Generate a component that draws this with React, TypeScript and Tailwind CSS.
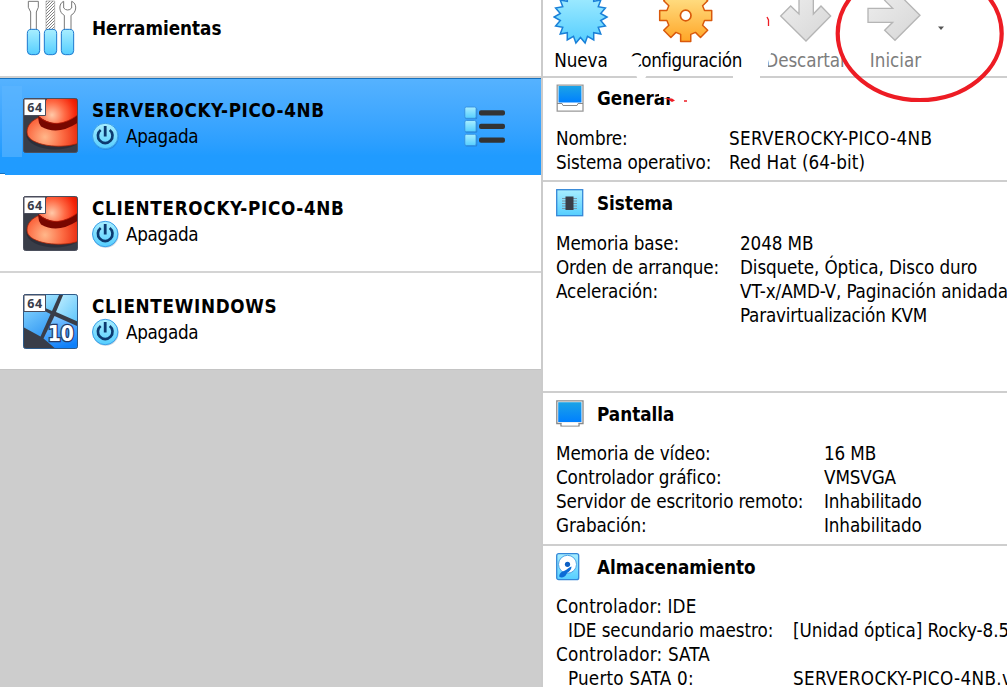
import React from 'react';

const polar = (cx: number, cy: number, r: number, deg: number) =>
  `${(cx + r * Math.cos((deg * Math.PI) / 180)).toFixed(2)},${(cy + r * Math.sin((deg * Math.PI) / 180)).toFixed(2)}`;

const starPoints = Array.from({ length: 36 }, (_, i) => polar(28, 17, i % 2 ? 20.5 : 26.5, i * 10)).join(' ');
const gearPoints = Array.from({ length: 8 }, (_, i) => {
  const a = i * 45;
  return [polar(28, 15.5, 19.5, a - 15), polar(28, 15.5, 26.5, a - 11), polar(28, 15.5, 26.5, a + 11), polar(28, 15.5, 19.5, a + 15)].join(' ');
}).join(' ');

function Defs() {
  return (
    <svg className="absolute h-0 w-0" aria-hidden="true">
      <defs>
        <linearGradient id="cyan" x1="0" y1="0" x2="0" y2="1">
          <stop offset="0" stopColor="#a8eeff" />
          <stop offset="1" stopColor="#55ceff" />
        </linearGradient>
        <linearGradient id="orange" x1="0" y1="0" x2="0" y2="1">
          <stop offset="0" stopColor="#ffe894" />
          <stop offset="1" stopColor="#ffa526" />
        </linearGradient>
        <linearGradient id="gray" x1="0" y1="0" x2="1" y2="1">
          <stop offset="0" stopColor="#eeeeee" />
          <stop offset="1" stopColor="#d6d6d6" />
        </linearGradient>
        <linearGradient id="screen" x1="0" y1="0" x2="0" y2="1">
          <stop offset="0" stopColor="#1ca3e6" />
          <stop offset="1" stopColor="#0080ff" />
        </linearGradient>
        <radialGradient id="crown" gradientUnits="userSpaceOnUse" cx="29" cy="17" r="32">
          <stop offset="0" stopColor="#ffc9a8" />
          <stop offset="0.4" stopColor="#ff6a45" />
          <stop offset="0.75" stopColor="#f52408" />
          <stop offset="1" stopColor="#cc1400" />
        </radialGradient>
        <radialGradient id="brim" gradientUnits="userSpaceOnUse" cx="22" cy="39" r="36">
          <stop offset="0" stopColor="#ffb78a" />
          <stop offset="0.5" stopColor="#fc6a42" />
          <stop offset="1" stopColor="#e62208" />
        </radialGradient>
        <linearGradient id="pane" x1="0" y1="0" x2="0.5" y2="1">
          <stop offset="0" stopColor="#8fdcff" />
          <stop offset="1" stopColor="#3c9ff5" />
        </linearGradient>
        <linearGradient id="paneLight" x1="0" y1="0" x2="1" y2="1">
          <stop offset="0" stopColor="#c4f0ff" />
          <stop offset="1" stopColor="#5cc4fb" />
        </linearGradient>
        <linearGradient id="paneDeep" x1="0" y1="0" x2="0.3" y2="1">
          <stop offset="0" stopColor="#8fcfff" />
          <stop offset="1" stopColor="#0f80fa" />
        </linearGradient>
        <pattern id="hatch" width="9" height="9" patternUnits="userSpaceOnUse">
          <path d="M0 9 L9 0" stroke="#555" strokeWidth="2.200" />
        </pattern>
        <clipPath id="tile">
          <rect x="1" y="1" width="53" height="53" rx="1.5" />
        </clipPath>
      </defs>
    </svg>
  );
}

function ToolsIcon() {
  return (
    <svg className="block" width="52" height="57" viewBox="78 0 156 171">
      <g fill="#fff" stroke="#777" strokeWidth="3">
        <path d="M85 4H115V22L109 36V90H92V36L85 22Z" />
        <path d="M191 4C175 10 176 38 193 46V90H213V46C231 37 232 10 215 4V24Q210 30 203 30Q196 30 191 24Z" />
      </g>
      <path d="M138 3H164V90H138Z" fill="#fff" />
      <path d="M138 3H164V90H138Z" fill="url(#hatch)" stroke="#999" strokeWidth="2" />
      <g fill="url(#cyan)" stroke="#1c78cf" strokeWidth="3">
        <rect x="82" y="88" width="37" height="76" rx="12" />
        <rect x="133" y="88" width="37" height="76" rx="12" />
        <rect x="184" y="88" width="37" height="76" rx="12" />
      </g>
    </svg>
  );
}

function Badge64() {
  return (
    <g>
      <path d="M1 1H22.5V17.5H1Z" fill="#fff" stroke="#4a4d5c" strokeWidth="1" />
      <text x="12" y="13.800" textAnchor="middle" fontFamily="Open Sans" fontWeight="700" fontSize="12.5" letterSpacing="0.5" fontStretch="normal" fill="#393d4b">64</text>
    </g>
  );
}

function HatIcon() {
  return (
    <svg className="block shrink-0" width="55" height="55" viewBox="0 0 55 55">
      <rect x="0.5" y="0.5" width="54" height="54" rx="2" fill="#393d48" stroke="#4b4f5c" />
      <g clipPath="url(#tile)">
        <ellipse cx="32" cy="36" rx="29" ry="15.5" fill="#20222b" opacity="0.5" />
        <path d="M4 34C4 27 9 22 17 19L56 20V45C46 49 30 49 20 46.500C10 44 4 40 4 34Z" fill="url(#brim)" stroke="#a82408" strokeWidth="0.800" />
        <path d="M16 20C16 14 20 6 25 0H56V22C42 32 22 31 16 20Z" fill="url(#crown)" />
        <path d="M15.500 18Q14.500 24 18 28.500Q35 38.500 56 24V16Q34 33.500 15.500 18Z" fill="#780700" />
        <path d="M16.500 19.500Q34 33 56 16" fill="none" stroke="#b51a07" strokeWidth="0.800" />
      </g>
      <Badge64 />
    </svg>
  );
}

function WindowsIcon() {
  return (
    <svg className="block shrink-0" width="55" height="55" viewBox="0 0 55 55">
      <rect x="0.5" y="0.5" width="54" height="54" rx="2" fill="#393d48" stroke="#2d5b8b" />
      <g clipPath="url(#tile)">
        <path d="M0 0H36.500L29 17L0 4Z" fill="url(#paneLight)" />
        <path d="M40.500 0H56V28L33 18Z" fill="url(#paneLight)" />
        <path d="M0 6L27.500 20L17.500 42.500L0 33Z" fill="url(#pane)" />
        <path d="M31.500 22L56 33V56H34L20.500 44.500Z" fill="url(#paneDeep)" />
      </g>
      <Badge64 />
      <text x="37.800" y="46.500" textAnchor="middle" fontFamily="DejaVu Sans Condensed, DejaVu Sans" fontWeight="700" fontSize="21" fill="#fff" stroke="#273b67" strokeWidth="2.500" paintOrder="stroke">10</text>
    </svg>
  );
}

function PowerIcon() {
  return (
    <svg className="block shrink-0" width="28" height="28" viewBox="0 0 28 28">
      <circle cx="13.700" cy="14.800" r="13" fill="#1b4f80" opacity="0.25" />
      <circle cx="13.200" cy="14" r="12.700" fill="url(#cyan)" stroke="#3c9fe8" strokeWidth="1" />
      <path d="M8.700 8A7.300 7.300 0 1 0 17.700 8" fill="none" stroke="#0c3a70" strokeWidth="2.700" />
      <path d="M13.200 4V14.500" stroke="#0c3a70" strokeWidth="2.800" />
    </svg>
  );
}

function ListIcon() {
  return (
    <svg className="block" width="43" height="42" viewBox="0 0 43 42">
      {[1, 14.5, 28.3].map((y) => (
        <g key={y}>
          <rect x="1.300" y={y + 0.7} width="12" height="11.500" rx="1.500" fill="#1c6db8" opacity="0.5" />
          <rect x="0.800" y={y} width="11.300" height="11.300" rx="1.500" fill="url(#cyan)" stroke="#3590df" strokeWidth="0.900" />
          <rect x="15" y={y + 3.3} width="26" height="5.200" rx="2" fill="#333" />
        </g>
      ))}
    </svg>
  );
}

function MonitorIcon({ desktop }: { desktop?: boolean }) {
  return (
    <svg className="block" width="28" height="28" viewBox="0 0 28 28">
      {desktop ? (
        <>
          <path d="M1.200 1.200H27V27.200H1.200Z" fill="#fff" stroke="#999" strokeWidth="1.300" />
          <path d="M1 19.500H6L7 21.500H21L22 19.500H27" fill="none" stroke="#888" strokeWidth="1" />
          <path d="M2.500 2H25.500V18.500H2.500Z" fill="url(#screen)" />
        </>
      ) : (
        <>
          <path d="M5 22H23V26H5Z" fill="#fff" stroke="#777" strokeWidth="1.200" />
          <path d="M0.800 0.800H27V23.500H0.800Z" fill="#fff" stroke="#888" strokeWidth="1.300" />
          <path d="M5.700 22.500H22.300V25.400H5.700Z" fill="#fff" />
          <path d="M2.200 2.200H25.500V22H2.200Z" fill="url(#screen)" />
        </>
      )}
    </svg>
  );
}

function ChipIcon() {
  return (
    <svg className="block" width="28" height="28" viewBox="0 0 28 28">
      <rect x="0.700" y="0.700" width="26" height="26" fill="url(#cyan)" stroke="#3487d8" strokeWidth="1.300" />
      <path d="M6 9.500H21M6 12H21M6 14.500H21M6 17H21M6 19.500H21" stroke="#7896a8" strokeWidth="1" />
      <rect x="9.500" y="7.500" width="8" height="13.500" fill="#393d48" />
    </svg>
  );
}

function DiskIcon() {
  return (
    <svg className="block" width="28" height="28" viewBox="0 0 28 28">
      <rect x="0.700" y="0.700" width="22" height="26" rx="2" fill="url(#cyan)" stroke="#3487d8" strokeWidth="1.300" />
      <circle cx="11.500" cy="11.300" r="9" fill="#fff" stroke="#4fa5e6" strokeWidth="1" />
      <path d="M3.500 24C2.500 20.500 6 18.500 9 17.500C11.500 16.500 13 14 15.500 13.500C15.500 18 11.500 19 10.500 21C9.500 24 6 25 3.500 24Z" fill="#0c6bd6" />
      <circle cx="11.500" cy="11.300" r="2.600" fill="#0c5fc4" />
    </svg>
  );
}

function Machine({ name, icon, track }: { name: string; icon: React.ReactNode; track: string }) {
  return (
    <div className="flex gap-[14px] pl-[23px]">
      {icon}
      <div className="-mt-px">
        <div className={`h-[26px] leading-[27px] font-bold ${track}`}>{name}</div>
        <div className="flex h-7 gap-[7px]">
          <div className="-mt-px"><PowerIcon /></div>
          <span className="-ml-px leading-[27px] tracking-[-0.3px]">Apagada</span>
        </div>
      </div>
    </div>
  );
}

function Heading({ icon, children }: { icon: React.ReactNode; children: React.ReactNode }) {
  return (
    <div className="flex h-7 items-center">
      <div className="w-[41px]">{icon}</div>
      <h2 className="pt-[2px] font-bold">{children}</h2>
    </div>
  );
}

type Row = { k: string; v?: string; kc?: string; vc?: string };

function Rows({ rows, col, gap = 'mt-[15px]' }: { rows: Row[]; col: string; gap?: string }) {
  return (
    <div className={`leading-6 tracking-[-0.12px] ${gap}`}>
      {rows.map(({ k, v = '', kc = '', vc = '' }) => (
        <div key={k + v} className="flex h-6">
          <div className={`shrink-0 ${col} ${kc}`}>{k}</div>
          <div className={vc}>{v}</div>
        </div>
      ))}
    </div>
  );
}

export default function App() {
  return (
    <div className="relative flex h-[687px] w-[1007px] overflow-hidden bg-white font-['DejaVu_Sans_Condensed','DejaVu_Sans',sans-serif] text-[18.7px] whitespace-nowrap text-black [font-stretch:condensed]">
      <Defs />
      <aside className="flex w-[541px] shrink-0 flex-col bg-[#cdcdcd]">
        <div className="flex h-[76px] shrink-0 bg-white pl-[26px]">
          <ToolsIcon />
          <div className="pt-[15px] pl-[14px] leading-[27px] font-bold">Herramientas</div>
        </div>
        <div className="relative h-[100px] shrink-0 border-t-2 border-[#d0d0d0] bg-white">
          <div className="h-[97px] border-t border-[#1671bd] bg-linear-to-b from-[#55b2ff] to-[#209bff] to-80% pt-[19px]">
            <div className="absolute top-2 left-[2px] h-[71px] w-5 bg-[#5db6ff]/60" />
            <div className="absolute bottom-0 left-0 h-[3px] w-[5px] border-t border-[#1671bd] bg-white" />
            <Machine name="SERVEROCKY-PICO-4NB" icon={<HatIcon />} track="tracking-[0.6px]" />
            <div className="absolute top-7 left-[464px]"><ListIcon /></div>
          </div>
        </div>
        <div className="h-[97px] shrink-0 border-b-2 border-[#d4d4d4] bg-white pt-5">
          <Machine name="CLIENTEROCKY-PICO-4NB" icon={<HatIcon />} track="tracking-[0.7px]" />
        </div>
        <div className="h-[97px] shrink-0 border-b border-[#c4c4c4] bg-white pt-[21px]">
          <Machine name="CLIENTEWINDOWS" icon={<WindowsIcon />} track="tracking-[0.7px]" />
        </div>
      </aside>
      <main className="flex min-w-0 flex-1 flex-col border-l-2 border-[#cbcbcb]">
        <div className="relative flex h-[78px] shrink-0 border-b-2 border-[#cecece] pl-[10px]">
          <div className="mr-[21px] flex w-[56px] flex-col items-center">
            <svg width="56" height="49" viewBox="0.5 0 56 49" className="block shrink-0">
              <polygon points={starPoints} fill="url(#cyan)" stroke="#1980d8" strokeWidth="1.500" />
            </svg>
            <span className="leading-6 tracking-[-0.1px]">Nueva</span>
          </div>
          <div className="mr-[22px] flex w-[112px] flex-col items-center">
            <svg width="56" height="49" viewBox="0.3 0 56 49" className="block shrink-0">
              <polygon points={gearPoints} fill="url(#orange)" stroke="#d9590b" strokeWidth="1.500" strokeLinejoin="round" />
              <circle cx="28" cy="15.500" r="5.300" fill="#fff" stroke="#d9590b" strokeWidth="1.700" />
            </svg>
            <span className="leading-6 tracking-[-0.35px]">Configuración</span>
          </div>
          <div className="mr-[18px] flex w-[84px] flex-col items-center text-[#7d7d7d]">
            <svg width="56" height="49" viewBox="54 0 168 147" className="block shrink-0">
              <path d="M117 -20V42L92 18L62 48L138 123L212 48L183 18L160 42V-20Z" fill="url(#gray)" stroke="#b5b5b5" strokeWidth="4" />
            </svg>
            <span className="leading-6 tracking-[-0.1px]">Descartar</span>
          </div>
          <div className="flex w-[56px] flex-col items-center text-[#7d7d7d]">
            <svg width="56" height="49" viewBox="315 0 168 147" className="block shrink-0">
              <path d="M321 25H395L371 1L402 -29L477 46L402 121L371 91L395 67H321Z" fill="url(#gray)" stroke="#b5b5b5" strokeWidth="4" />
            </svg>
            <span className="pl-[3px] leading-6">Iniciar</span>
          </div>
          <svg width="8" height="48" viewBox="0 0 8 48" className="ml-[15px] block"><path d="M1 26.500H7L4 30Z" fill="#555" /></svg>
        </div>
        <section className="h-[104px] shrink-0 border-b-2 border-[#cecece] pt-[6px] pl-[13px]">
          <Heading icon={<MonitorIcon desktop />}>General</Heading>
          <Rows
            col="w-[173px]"
            rows={[
              { k: 'Nombre:', v: 'SERVEROCKY-PICO-4NB', vc: 'tracking-[0.35px]' },
              { k: 'Sistema operativo:', v: 'Red Hat (64-bit)', kc: 'tracking-[-0.2px]', vc: 'tracking-[0.1px]' },
            ]}
          />
        </section>
        <section className="h-[211px] shrink-0 border-b-2 border-[#cecece] pt-[7px] pl-[13px]">
          <Heading icon={<ChipIcon />}>Sistema</Heading>
          <Rows
            col="w-[184px]"
            rows={[
              { k: 'Memoria base:', v: '2048 MB' },
              { k: 'Orden de arranque:', v: 'Disquete, Óptica, Disco duro' },
              { k: 'Aceleración:', v: 'VT-x/AMD-V, Paginación anidada,' },
              { k: '', v: 'Paravirtualización KVM', vc: 'tracking-[-0.2px]' },
            ]}
          />
        </section>
        <section className="h-[153px] shrink-0 border-b-2 border-[#cecece] pt-[7px] pl-[13px]">
          <Heading icon={<MonitorIcon />}>Pantalla</Heading>
          <Rows
            gap="mt-[14px]"
            col="w-[268px]"
            rows={[
              { k: 'Memoria de vídeo:', v: '16 MB' },
              { k: 'Controlador gráfico:', v: 'VMSVGA' },
              { k: 'Servidor de escritorio remoto:', v: 'Inhabilitado', kc: 'tracking-[-0.16px]' },
              { k: 'Grabación:', v: 'Inhabilitado' },
            ]}
          />
        </section>
        <section className="pt-[7px] pl-[13px]">
          <Heading icon={<DiskIcon />}>Almacenamiento</Heading>
          <Rows
            gap="mt-[14px]"
            col="w-[237px]"
            rows={[
              { k: 'Controlador: IDE', kc: 'tracking-[0.15px]' },
              { k: 'IDE secundario maestro:', v: '[Unidad óptica] Rocky-8.5', kc: 'pl-3 tracking-[-0.05px]', vc: 'tracking-[-0.02px]' },
              { k: 'Controlador: SATA', kc: 'tracking-[0.18px]' },
              { k: 'Puerto SATA 0:', v: 'SERVEROCKY-PICO-4NB.vdi', kc: 'pl-3 tracking-[0.2px]', vc: 'tracking-[0.35px]' },
            ]}
          />
        </section>
      </main>
      <svg className="absolute top-0 left-[620px]" width="387" height="115" viewBox="620 0 387 115">
        <path d="M628 57L634 56L641 61L637 70H628ZM636 75H647L644 80H638ZM733 75H760V80H733ZM762 50H772L768 63V68H762ZM845 48H852V70H845ZM659 86H678V97H659Z" fill="#fff" />
        <path d="M767 17L768.500 20V26M684 101H687" fill="none" stroke="#ed1c24" strokeWidth="1.300" />
        <path d="M663 98L672 98.500L675 100.500L672 102L668 99.500Z" fill="#ed1c24" />
        <ellipse cx="919.700" cy="33.500" rx="82" ry="66.500" fill="none" stroke="#ed1c24" strokeWidth="4.200" />
      </svg>
    </div>
  );
}
